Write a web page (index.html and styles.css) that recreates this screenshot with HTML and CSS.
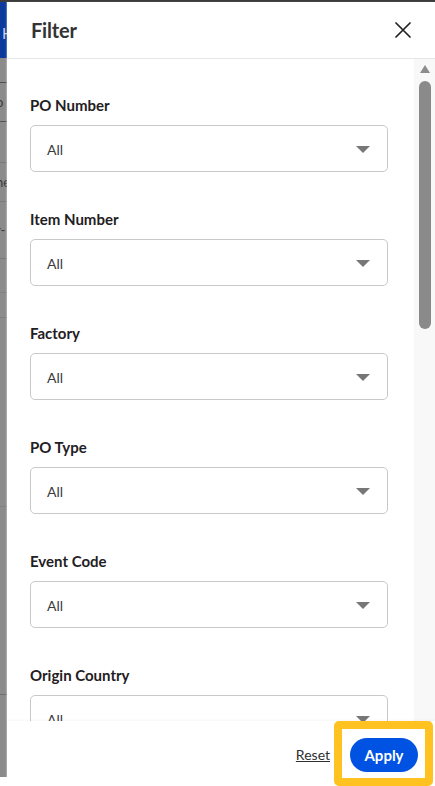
FILE: index.html
```html
<!DOCTYPE html>
<html lang="en">
<head>
    <meta charset="UTF-8">
    <meta name="viewport" content="width=device-width, initial-scale=1.0">
    <title>Filter</title>
    <link rel="stylesheet" href="styles.css">
</head>
<body>
    <div class="page">
        <div class="page-head"><span>H</span></div>
        <div class="page-row r1"></div>
        <div class="page-row r2"><span>o</span></div>
        <div class="page-row r3"></div>
        <div class="page-row r4"><span>ne</span></div>
        <div class="page-row r5"><span>r-</span></div>
        <div class="page-row r6"></div>
        <div class="page-row r7"></div>
        <div class="page-row r8"></div>
        <div class="page-row r9"></div>
        <div class="page-row r10"></div>
    </div>

    <div class="drawer">
        <div class="drawer-header">
            <h2>Filter</h2>
            <button class="close-button" aria-label="Close">
                <svg width="16" height="16" viewBox="0 0 16 16">
                    <path d="M1 1 L15 15 M15 1 L1 15" stroke="#222" stroke-width="1.7" fill="none" stroke-linecap="round"/>
                </svg>
            </button>
        </div>

        <div class="drawer-body">
            <div class="filter-list">
                <div class="filter-group">
                    <label>PO Number</label>
                    <div class="select"><span>All</span><i class="caret"></i></div>
                </div>
                <div class="filter-group">
                    <label>Item Number</label>
                    <div class="select"><span>All</span><i class="caret"></i></div>
                </div>
                <div class="filter-group">
                    <label>Factory</label>
                    <div class="select"><span>All</span><i class="caret"></i></div>
                </div>
                <div class="filter-group">
                    <label>PO Type</label>
                    <div class="select"><span>All</span><i class="caret"></i></div>
                </div>
                <div class="filter-group">
                    <label>Event Code</label>
                    <div class="select"><span>All</span><i class="caret"></i></div>
                </div>
                <div class="filter-group">
                    <label>Origin Country</label>
                    <div class="select"><span>All</span><i class="caret"></i></div>
                </div>
            </div>
            <div class="scrollbar">
                <i class="scroll-up"></i>
                <div class="scroll-thumb"></div>
            </div>
        </div>

        <div class="drawer-footer">
            <a class="reset-link" href="#">Reset</a>
            <div class="apply-wrap">
                <button class="apply-button">Apply</button>
                <span class="highlight"></span>
            </div>
        </div>
    </div>
</body>
</html>
```

FILE: styles.css
```css
html, body {
    margin: 0;
    padding: 0;
    background-color: #fff;
}
body {
    width: 435px;
    height: 786px;
    position: relative;
    overflow: hidden;
    font-family: Lato, "Open Sans", Arial, sans-serif;
    color: #2e2f32;
}
.page {
    height: 777px;
    width: 435px;
    background-color: #8b8b8b;
    border-top: 2px solid #3b3b3b;
    box-sizing: border-box;
    display: flex;
    flex-direction: column;
}
.page-head {
    height: 56px;
    flex-shrink: 0;
    background-color: #0b3a9c;
    color: #c9d4ee;
    font-size: 15px;
    padding: 22px 0 0 2px;
    box-sizing: border-box;
}
.page-row {
    flex-shrink: 0;
    border-bottom: 1px solid #7a7a7a;
    box-sizing: border-box;
    color: #3a3a3a;
    font-size: 13px;
    display: flex;
    align-items: center;
}
.page-row span {
    margin-left: -4px;
}
.r1 { height: 25px; border-color: #4f4f4f; }
.r2 { height: 39px; border-color: #555; }
.r3 { height: 41px; }
.r4 { height: 39px; }
.r5 { height: 57px; }
.r6 { height: 34px; border-color: #7f7f7f; }
.r7 { height: 25px; border-color: #7f7f7f; }
.r8 { height: 189px; border-color: #808080; }
.r9 { height: 188px; border-color: #6f6f6f; }
.r10 { flex-grow: 1; border-bottom: none; }
.drawer {
    position: absolute;
    top: 2px;
    left: 7px;
    right: 0;
    height: 775px;
    background-color: #fff;
    box-shadow: -1px 0 1px rgba(255, 255, 255, 0.25);
    display: flex;
    flex-direction: column;
}
.drawer-header {
    height: 57px;
    flex-shrink: 0;
    border-bottom: 1px solid #e6e6e6;
    box-sizing: border-box;
    display: flex;
    align-items: center;
    justify-content: space-between;
    padding: 0 24px 0 24px;
}
.drawer-header h2 {
    margin: 0;
    font-size: 20px;
    font-weight: 700;
    color: #333;
    letter-spacing: -0.2px;
}
.close-button {
    background: none;
    border: none;
    padding: 0;
    width: 16px;
    height: 16px;
    margin-top: -1px;
    cursor: pointer;
}
.drawer-body {
    flex-grow: 1;
    display: flex;
    overflow: hidden;
    min-height: 0;
}
.filter-list {
    flex-grow: 1;
    padding: 36px 26px 0 23px;
}
.filter-group {
    margin-bottom: 37px;
}
.filter-group label {
    display: block;
    font-size: 15px;
    font-weight: 700;
    line-height: 20px;
    color: #1f2023;
    margin-bottom: 10px;
}
.select {
    height: 47px;
    border: 1px solid #c9c9c9;
    border-radius: 5px;
    box-sizing: border-box;
    display: flex;
    align-items: center;
    justify-content: space-between;
    padding: 1px 17px 0 16px;
    font-size: 14px;
    color: #3a3b3e;
}
.caret {
    width: 0;
    height: 0;
    border-left: 7px solid transparent;
    border-right: 7px solid transparent;
    border-top: 7px solid #777;
}
.scrollbar {
    width: 21px;
    flex-shrink: 0;
    background-color: #f8f8f8;
    display: flex;
    flex-direction: column;
    align-items: center;
    padding-top: 6px;
    box-sizing: border-box;
}
.scroll-up {
    width: 0;
    height: 0;
    border-left: 5px solid transparent;
    border-right: 5px solid transparent;
    border-bottom: 8px solid #8c8c8c;
    margin-left: 1px;
}
.scroll-thumb {
    width: 12px;
    height: 248px;
    margin-top: 8px;
    margin-left: 1px;
    border-radius: 6px;
    background-color: #8a8a8a;
}
.drawer-footer {
    height: 56px;
    flex-shrink: 0;
    background-color: #fff;
    box-shadow: 0 -1px 3px rgba(0, 0, 0, 0.04);
    display: flex;
    align-items: flex-start;
    justify-content: flex-end;
    padding: 17px 17px 0 0;
    box-sizing: border-box;
    position: relative;
}
.reset-link {
    font-size: 14px;
    line-height: 34px;
    color: #2e2f32;
    text-decoration: underline;
    margin-right: 20px;
}
.apply-wrap {
    position: relative;
}
.apply-button {
    display: block;
    width: 68px;
    height: 34px;
    border: none;
    border-radius: 17px;
    background-color: #0053e2;
    color: #fff;
    font-family: Lato, "Open Sans", Arial, sans-serif;
    font-size: 15px;
    font-weight: 700;
    cursor: pointer;
}
.highlight {
    position: absolute;
    top: -17px;
    left: -16px;
    right: -15px;
    bottom: -14px;
    border: 8px solid #ffc220;
    border-radius: 5px;
}
```
